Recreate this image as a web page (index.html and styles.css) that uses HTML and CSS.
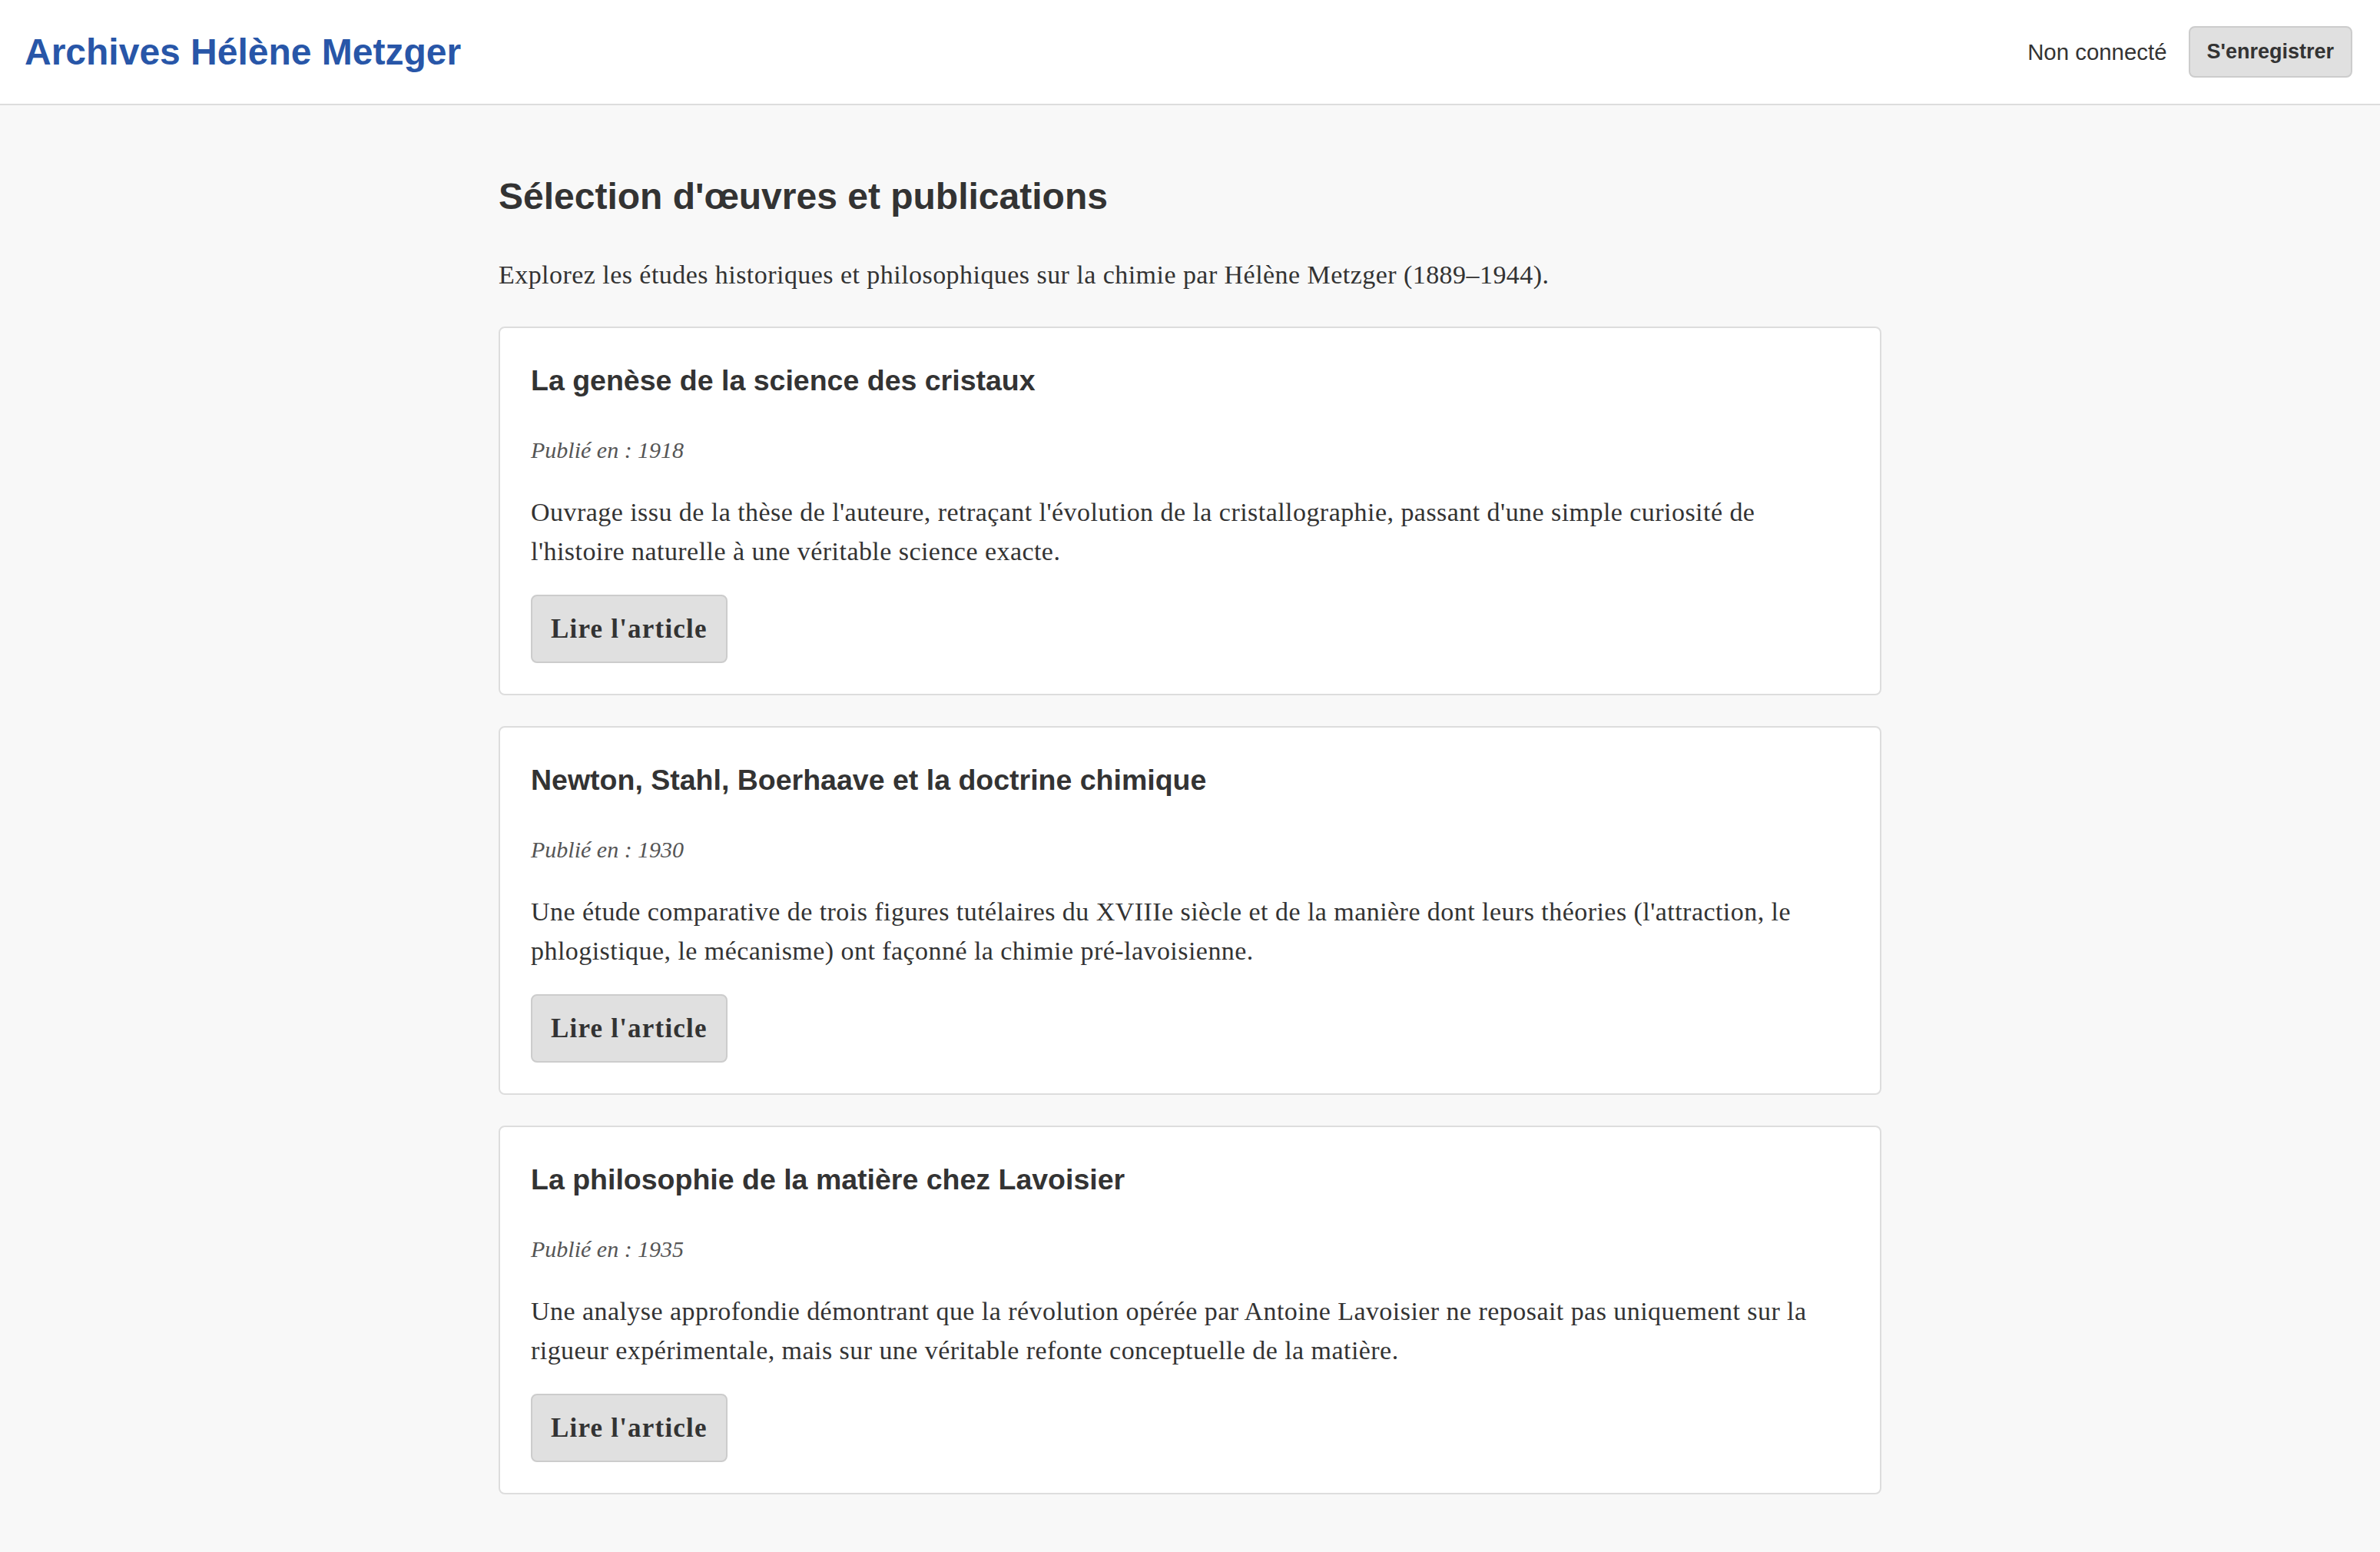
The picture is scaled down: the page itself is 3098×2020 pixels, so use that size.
FILE: index.html
```html
<!DOCTYPE html>
<html lang="fr">
<head>
    <meta charset="UTF-8">
    <meta name="viewport" content="width=device-width, initial-scale=1.0">
    <title>Archives Hélène Metzger</title>
    <link rel="stylesheet" href="styles.css">
</head>
<body>

    <header class="site-header">
        <a class="brand" href="#">Archives Hélène Metzger</a>
        <div class="user-area">
            <span class="status">Non connecté</span>
            <button class="btn-register">S'enregistrer</button>
        </div>
    </header>

    <main class="content">
        <h1 class="page-title">Sélection d'œuvres et publications</h1>
        <p class="intro">Explorez les études historiques et philosophiques sur la chimie par Hélène Metzger (1889–1944).</p>

        <article class="work-card">
            <h2 class="work-title">La genèse de la science des cristaux</h2>
            <p class="published">Publié en : 1918</p>
            <p class="summary">Ouvrage issu de la thèse de l'auteure, retraçant l'évolution de la cristallographie, passant d'une simple curiosité de l'histoire naturelle à une véritable science exacte.</p>
            <button class="read-btn">Lire l'article</button>
        </article>

        <article class="work-card">
            <h2 class="work-title">Newton, Stahl, Boerhaave et la doctrine chimique</h2>
            <p class="published">Publié en : 1930</p>
            <p class="summary">Une étude comparative de trois figures tutélaires du XVIIIe siècle et de la manière dont leurs théories (l'attraction, le phlogistique, le mécanisme) ont façonné la chimie pré-lavoisienne.</p>
            <button class="read-btn">Lire l'article</button>
        </article>

        <article class="work-card">
            <h2 class="work-title">La philosophie de la matière chez Lavoisier</h2>
            <p class="published">Publié en : 1935</p>
            <p class="summary">Une analyse approfondie démontrant que la révolution opérée par Antoine Lavoisier ne reposait pas uniquement sur la rigueur expérimentale, mais sur une véritable refonte conceptuelle de la matière.</p>
            <button class="read-btn">Lire l'article</button>
        </article>
    </main>

</body>
</html>
```

FILE: styles.css
```css
body {
    margin: 0;
    background-color: #f8f8f8;
    color: #333;
    font-family: "Liberation Serif", "Times New Roman", serif;
}
.site-header {
    display: flex;
    justify-content: space-between;
    align-items: center;
    height: 135px;
    padding: 0 36px 0 32px;
    background-color: #fff;
    border-bottom: 2px solid #ddd;
}
.brand {
    font-family: "Liberation Sans", Arial, sans-serif;
    font-weight: 700;
    font-size: 48px;
    color: #2856a8;
    text-decoration: none;
}
.user-area {
    display: flex;
    align-items: center;
    gap: 28px;
}
.status {
    font-family: "Liberation Sans", Arial, sans-serif;
    font-size: 29.4px;
    color: #333;
}
.btn-register {
    font-family: "Liberation Sans", Arial, sans-serif;
    font-weight: 700;
    font-size: 27px;
    color: #333;
    background-color: #e0e0e0;
    border: 2px solid #ccc;
    border-radius: 8px;
    padding: 16px 22px;
    cursor: pointer;
}
.content {
    max-width: 1800px;
    margin: 0 auto;
    padding: 90px 0 40px;
}
.page-title {
    font-family: "Liberation Sans", Arial, sans-serif;
    font-size: 48px;
    line-height: 1.2;
    margin: 0 0 46px;
}
.intro {
    font-size: 34px;
    line-height: 54px;
    letter-spacing: 0.45px;
    margin: 0 0 40px;
}
.work-card {
    background-color: #fff;
    border: 2px solid #ddd;
    border-radius: 8px;
    padding: 40px;
    margin-bottom: 40px;
}
.work-title {
    font-family: "Liberation Sans", Arial, sans-serif;
    font-size: 37.5px;
    line-height: 56px;
    margin: 0 0 38px;
}
.published {
    font-style: italic;
    font-size: 30px;
    line-height: 49px;
    color: #555;
    margin: 0 0 31px;
}
.summary {
    font-size: 34px;
    line-height: 51px;
    letter-spacing: 0.45px;
    margin: 0 0 31px;
}
.read-btn {
    font-family: "Liberation Serif", "Times New Roman", serif;
    font-weight: 700;
    font-size: 35px;
    line-height: 37px;
    letter-spacing: 1.2px;
    color: #333;
    background-color: #e0e0e0;
    border: 2px solid #ccc;
    border-radius: 8px;
    padding: 24px 24px;
    cursor: pointer;
}
```
